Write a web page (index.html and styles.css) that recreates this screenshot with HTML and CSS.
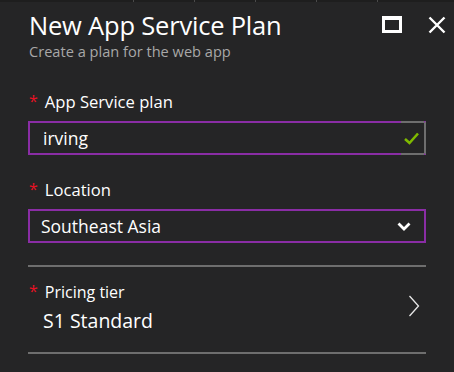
FILE: index.html
```html
<!DOCTYPE html>
<html lang="en">
<head>
  <meta charset="UTF-8">
  <title>New App Service Plan</title>
  <link rel="stylesheet" href="styles.css">
</head>
<body>

<div class="blade">
  <div class="strip">
    <span></span><span></span><span></span><span></span><span></span>
  </div>

  <div class="blade-header">
    <div class="titles">
      <h1>New App Service Plan</h1>
      <p class="subtitle">Create a plan for the web app</p>
    </div>
    <div class="blade-actions">
      <!-- maximize -->
      <svg class="icon-max" width="20" height="17" viewBox="0 0 20 17">
        <rect x="1.5" y="1.5" width="17" height="14" fill="none" stroke="#fff" stroke-width="3"/>
        <rect x="1" y="1" width="18" height="3" fill="#fff"/>
      </svg>
      <!-- close -->
      <svg class="icon-close" width="18" height="18" viewBox="0 0 18 18">
        <path d="M1.5 1.5 L16.5 16.5 M16.5 1.5 L1.5 16.5" stroke="#fff" stroke-width="2.4"/>
      </svg>
    </div>
  </div>

  <form class="blade-content">
    <div class="field">
      <label class="required">App Service plan</label>
      <div class="textbox">
        <span class="value">irving</span>
        <span class="status">
          <svg width="15" height="13" viewBox="0 0 15 13">
            <path d="M1 7 L5.5 11 L14 1.5" fill="none" stroke="#7fba00" stroke-width="2.6"/>
          </svg>
        </span>
      </div>
    </div>

    <div class="field field-end">
      <label class="required">Location</label>
      <div class="dropdown">
        <span class="value">Southeast Asia</span>
        <svg width="14" height="9" viewBox="0 0 14 9">
          <path d="M1.5 1.5 L7 7 L12.5 1.5" fill="none" stroke="#fff" stroke-width="2.8"/>
        </svg>
      </div>
    </div>

    <div class="selector">
      <div class="selector-text">
        <div class="selector-label required">Pricing tier</div>
        <div class="selector-value">S1 Standard</div>
      </div>
      <svg width="12" height="22" viewBox="0 0 12 22">
        <path d="M1.5 1 L10.5 11 L1.5 21" fill="none" stroke="#e8e8e8" stroke-width="1.3"/>
      </svg>
    </div>
  </form>
</div>

</body>
</html>
```

FILE: styles.css
```css
body { margin: 0; background: #252526; font-family: "Open Sans", "Noto Sans", sans-serif; color: #fff; }
.blade { width: 454px; height: 372px; overflow: hidden; }

.strip { height: 2px; background: #1e1e1e; display: flex; gap: 60px; padding-left: 133px; }
.strip span { width: 1px; height: 2px; background: #4a4a4a; }

.blade-header { display: flex; justify-content: space-between; padding: 6px 8px 0 29px; }
.blade-header h1 { margin: 0; font-size: 25.5px; font-weight: 400; line-height: 34px; letter-spacing: -0.2px; }
.subtitle { margin: 0; font-size: 14.6px; color: #a8a8a8; line-height: 18px; }
.blade-actions { display: flex; gap: 26px; padding-top: 8px; }

.blade-content { padding: 31px 28px 0 28px; }
.field { margin-bottom: 24px; }
.field-end { margin-bottom: 22px; }

label, .selector-label { display: block; font-size: 16.6px; line-height: 22px; margin: 0 0 8px 1px; }
.required:before { content: "*"; color: #e81123; margin-right: 7px; font-size: 16px; position: relative; top: -1px; }

.textbox, .dropdown { height: 30px; border: 2px solid #8a2da5; display: flex; align-items: center; }
.textbox { border-right-color: #6e6e6e; }
.value { flex: 1; font-size: 17.5px; padding-left: 13px; }
.dropdown .value { padding-left: 11px; }
.textbox .status { width: 21px; height: 30px; display: flex; align-items: center; justify-content: center;
  border-top: 2px solid #6e6e6e; border-bottom: 2px solid #6e6e6e; margin: -2px 0; padding-right: 2px; }
.dropdown svg { margin-right: 13px; }

.selector { border-top: 2px solid #6e6e6e; border-bottom: 2px solid #6e6e6e; display: flex;
  align-items: center; justify-content: space-between; height: 85px; padding-right: 6px; }
.selector-text { align-self: flex-start; padding-top: 14px; }
.selector-label { font-size: 16px; margin: 0 0 5px 1px; }
.selector-value { font-size: 19.5px; padding-left: 15px; line-height: 26px; }
.selector svg { margin-bottom: 7px; }
```
